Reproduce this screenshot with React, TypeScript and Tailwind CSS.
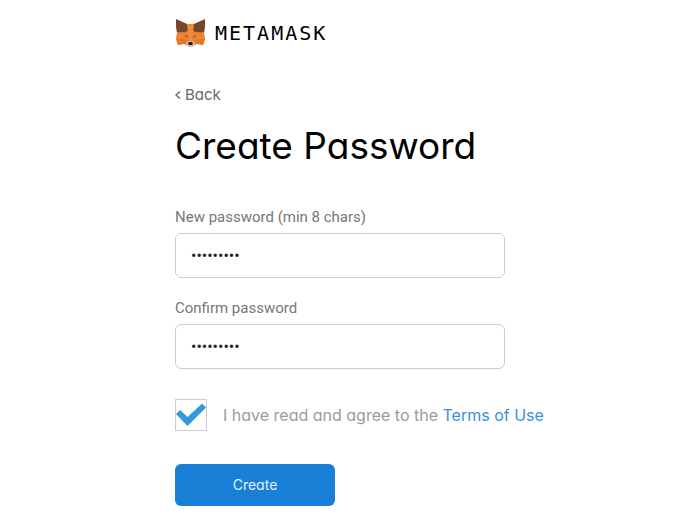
import { useState } from "react";

const brandFont =
  "font-['Inter','Liberation_Sans',sans-serif] [font-feature-settings:'cv11','ss03']";

function FoxLogo() {
  return (
    <svg className="h-7 w-8 shrink-0" viewBox="0 0 32 28" aria-hidden="true">
      <path d="M1 1 12 5h7L30 1v7l-1 6 1 5-2 7-6-1-4 2h-5l-4-2-6 1-2-7 1-5-1-6Z" fill="#ea8231" />
      <path d="M1 0 12 5l3 6-7 3-6-1-1-6Z" fill="#74462c" />
      <path d="M30 0 19 5l-3 6 7 3 6-1 1-6Z" fill="#74462c" />
      <path d="m12 5h7l-1 10-1 7h-3l-1-7Z" fill="#f08a35" />
      <path d="m3 14 6-1 4 6-3 3-9-2Z" fill="#ee8430" />
      <path d="m28 14-6-1-4 6 3 3 9-2Z" fill="#ee8430" />
      <path d="m1 20 9 0 2 4-9 2Z" fill="#e57626" />
      <path d="m30 20-9 0-2 4 9 2Z" fill="#e57626" />
      <path d="m10 16 3 1v2l-3-1Z" fill="#8f6a55" />
      <path d="m21 16-3 1v2l3-1Z" fill="#8f6a55" />
      <path d="m11 24 3-2h3l3 2-1 3-2 1h-3l-2-1Z" fill="#cfc1b6" />
      <path d="m14 23h3l1 2-1 1h-3l-1-1Z" fill="#221d1c" />
    </svg>
  );
}

interface PasswordFieldProps {
  id: string;
  label: string;
}

function PasswordField({ id, label }: PasswordFieldProps) {
  const [value, setValue] = useState("metamask1");
  return (
    <div className="flex flex-col gap-1 font-['Roboto',sans-serif]">
      <label htmlFor={id} className="text-[15px] leading-6 text-[#777777]">
        {label}
      </label>
      <input
        id={id}
        type="password"
        value={value}
        onChange={(event) => setValue(event.target.value)}
        className="h-[45px] w-full max-w-[330px] rounded-md border border-[#c9cdcf] bg-white px-[15px] text-base text-[#222222] outline-none"
      />
    </div>
  );
}

export default function App() {
  const [agreed, setAgreed] = useState(true);
  return (
    <main className={`min-h-screen bg-white pt-[19px] pb-5 pl-[25%] ${brandFont}`}>
      <header className="flex items-center gap-2">
        <FoxLogo />
        <span className="font-['DejaVu_Sans_Mono',monospace] text-xl tracking-widest text-black">
          METAMASK
        </span>
      </header>

      <button type="button" className="mt-9 flex items-center gap-1 text-[15px] leading-6 text-[#686868]">
        <svg className="h-2 w-1.5" viewBox="0 0 6 8" fill="none" aria-hidden="true">
          <path d="M5 .5 1 4l4 3.5" stroke="currentColor" strokeWidth="1.4" />
        </svg>
        Back
      </button>

      <h1 className="mt-[15px] text-[37px] leading-12 text-black">Create Password</h1>

      <form onSubmit={(event) => event.preventDefault()}>
        <div className="mt-[35px] flex flex-col gap-[18px]">
          <PasswordField id="new-password" label="New password (min 8 chars)" />
          <PasswordField id="confirm-password" label="Confirm password" />
        </div>

        <div className="mt-[30px] flex items-center gap-4">
          <span className="relative flex shrink-0">
            <input
              id="terms"
              type="checkbox"
              checked={agreed}
              onChange={(event) => setAgreed(event.target.checked)}
              className="size-8 appearance-none border border-[#cdcdcd] bg-white"
            />
            {agreed && (
              <svg
                className="pointer-events-none absolute inset-0 size-8"
                viewBox="0 0 32 32"
                aria-hidden="true"
              >
                <path d="M1 15 5 11l7.500 7L27 4.500 31 8.500 12.500 27Z" fill="#3498db" />
              </svg>
            )}
          </span>
          <p className="text-base text-[#9b9b9b]">
            <label htmlFor="terms">I have read and agree to the</label>{" "}
            <a href="#terms-of-use" className="text-[#3b8fdb]">
              Terms of Use
            </a>
          </p>
        </div>

        <button
          type="submit"
          className="mt-[33px] h-[42px] w-40 rounded-md bg-[#1880d6] text-sm text-[#e6f2fc]"
        >
          Create
        </button>
      </form>
    </main>
  );
}
